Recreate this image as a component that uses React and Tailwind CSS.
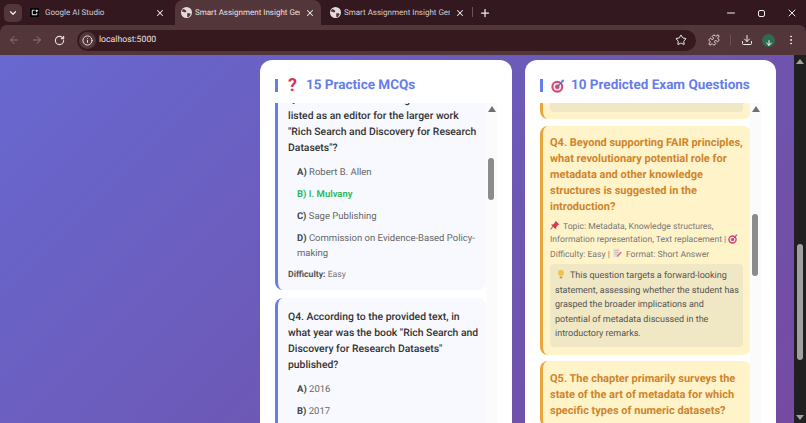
import { ChevronDown, X, Plus, Minus, ArrowLeft, ArrowRight, RotateCw, Info, Star, Puzzle, Download, EllipsisVertical, ArrowDown } from "lucide-react";

const Pin = () => (
  <svg viewBox="0 0 16 16" className="inline-block w-[10px] h-[10px] mr-[3px] align-[-1px]">
    <path d="M9 1l6 6-2 1-3 3 0 3-2 0-6-6 0-1 3 0 3-3z" fill="#d9364f" />
    <path d="M5 10l-4 5" stroke="#a8344a" strokeWidth="1.6" />
  </svg>
);

const Target = ({ size }) => (
  <svg viewBox="0 0 20 20" style={{ width: size, height: size }} className="inline-block shrink-0 align-[-2px]">
    <circle cx="9" cy="11" r="8.5" fill="#d6456f" />
    <circle cx="9" cy="11" r="5.6" fill="#f6e6ea" />
    <circle cx="9" cy="11" r="3.2" fill="#d6456f" />
    <path d="M9 11l8-8" stroke="#4a78c8" strokeWidth="2" />
    <path d="M15 1l4 0-1 3-3 1z" fill="#4a90d9" />
  </svg>
);

const Memo = () => (
  <svg viewBox="0 0 16 16" className="inline-block w-[10px] h-[10px] mr-[4px] align-[-1px]">
    <rect x="2" y="1" width="10" height="14" fill="#eadfd4" />
    <path d="M4 4h6M4 7h6M4 10h4" stroke="#b9a6a0" strokeWidth="1" />
    <path d="M8 12l6-6 1.5 1.5-6 6-2 .5z" fill="#d8608a" />
  </svg>
);

const Bulb = () => (
  <svg viewBox="0 0 16 16" className="inline-block w-[10px] h-[10px] ml-[1px] mr-[4px] align-[-1px]">
    <path d="M8 1a5 5 0 0 0-3 9l1 2h4l1-2a5 5 0 0 0-3-9z" fill="#f4c04e" />
    <rect x="6" y="12.5" width="4" height="2.5" fill="#a59a84" />
  </svg>
);

const StudioIcon = () => (
  <svg viewBox="0 0 16 16" className="w-[9px] h-[9px] shrink-0">
    <rect width="16" height="16" rx="2" fill="#000" />
    <path d="M8 4H4v8h8V9" fill="none" stroke="#fff" strokeWidth="1.6" />
    <path d="M12 2l1 2 2 1-2 1-1 2-1-2-2-1 2-1z" fill="#fff" />
  </svg>
);

const GlobeIcon = ({ className = "" }) => (
  <svg viewBox="0 0 16 16" className={`w-[11px] h-[11px] shrink-0 ${className}`}>
    <circle cx="8" cy="8" r="8" fill="#e4dcdc" />
    <path d="M3 3l3 1 2 2-2 2-3-1-2-1zM9 9l4 0 1 2-3 4-2-1z" fill="#53363a" />
  </svg>
);

const Tab = ({ active, icon, title, width, closeGap = "pr-[6px]" }) => (
  <div
    style={{ width }}
    className={`h-[25px] flex items-center pl-[6px] ${closeGap} shrink-0 ${active ? "bg-[#53363a] rounded-t-[8px] text-[#e9e1e1]" : "text-[#d5c9ca]"}`}
  >
    {icon}
    <span className="ml-[3px] flex-1 text-[8px] whitespace-nowrap overflow-hidden">{title}</span>
    <X size={10} strokeWidth={2.5} className="ml-[5px] text-[#eee]" />
  </div>
);

const Option = ({ letter, children, correct }) => (
  <p className={`mb-[7px] pl-[9px] text-[9.5px] leading-[15px] ${correct ? "text-[#28b765] font-semibold" : "text-[#666]"}`}>
    <span className={`font-bold ${correct ? "" : "text-[#444]"}`}>{letter}) </span>
    {children}
  </p>
);

const McqCard = ({ children, className = "" }) => (
  <div className={`bg-[#f8f9ff] border-l-[3px] border-[#667eea] rounded-[8px] pl-[10px] pr-[6px] ${className}`}>
    {children}
  </div>
);

const Scrollbar = ({ top, height }) => (
  <div className="absolute top-0 bottom-0 right-0 w-[11px] bg-[#fbfbfc]">
    <div className="mx-auto mt-[3px] w-0 h-0 border-x-[4px] border-x-transparent border-b-[6px] border-b-[#6f6f6f]" />
    <div style={{ top, height }} className="absolute left-[2px] w-[6px] rounded-[3px] bg-[#8b8b8b]" />
  </div>
);

const Heading = ({ icon, children }) => (
  <div className="flex items-center h-[43px] pl-[15px] pt-[8px]">
    <div className="w-[3px] h-[13px] bg-[#667eea] mr-[10px]" />
    {icon}
    <h2 className="text-[13.5px] font-bold text-[#667eea] whitespace-nowrap">{children}</h2>
  </div>
);

export default function App() {
  return (
    <div className="w-[806px] h-[423px] overflow-hidden flex flex-col bg-[#33191f] font-['Roboto',sans-serif] [text-rendering:geometricPrecision]">
      {/* tab strip */}
      <div className="h-[25px] flex items-end pt-[4px] pl-[4px] bg-[#33191f]">
        <div className="w-[18px] h-[18px] mb-[3px] mr-[3px] rounded-[5px] bg-[#53363a] flex items-center justify-center">
          <ChevronDown size={10} strokeWidth={3} className="text-[#eee]" />
        </div>
        <Tab width={150} closeGap="pr-[10px]" title="Google AI Studio" icon={<span className="flex ml-[-1px] mr-[3px]"><StudioIcon /></span>} />
        <Tab active width={146} title="Smart Assignment Insight Gene" icon={<GlobeIcon />} />
        <Tab width={150} title="Smart Assignment Insight Gene" icon={<GlobeIcon className="ml-[3px]" />} />
        <div className="w-px h-[10px] bg-[#6a5256] mb-[8px] ml-[1px]" />
        <Plus size={12} strokeWidth={2.5} className="text-[#eee] mb-[6px] ml-[6px]" />
        <div className="flex-1" />
        <div className="flex items-center gap-[21px] mb-[6px] pr-[8px] text-[#eee]">
          <Minus size={12} />
          <div className="w-[7px] h-[7px] border-[1.5px] border-[#eee] rounded-[2px]" />
          <X size={12} strokeWidth={2} />
        </div>
      </div>
      {/* toolbar */}
      <div className="h-[30px] flex items-center bg-[#53363a] pl-[8px] pr-[8px] rounded-t-[7px]">
        <ArrowLeft size={12} className="text-[#8a7578] mr-[11px]" />
        <ArrowRight size={12} className="text-[#8a7578] mr-[11px]" />
        <RotateCw size={11} strokeWidth={2.5} className="text-[#e6dcdc] mr-[12px]" />
        <div className="w-[619px] h-[21px] rounded-full bg-[#35191f] flex items-center pl-[2px] pr-[9px]">
          <div className="w-[17px] h-[17px] rounded-full bg-[#53363a] flex items-center justify-center">
            <Info size={11} className="text-[#eee]" />
          </div>
          <span className="ml-[3px] flex-1 pt-[1px] text-[8.7px] text-[#e9e1e1]">localhost:5000</span>
          <Star size={12} className="text-[#eee]" />
        </div>
        <Puzzle size={12} className="text-[#e6dcdc] ml-[12px]" />
        <div className="w-px h-[10px] bg-[#6a5256] ml-[10px]" />
        <Download size={12} className="text-[#eee] ml-[10px]" />
        <div className="w-[13px] h-[13px] rounded-full bg-[#2e6b4f] ml-[9px] flex items-end justify-center">
          <ArrowDown size={8} strokeWidth={3} className="text-white" />
        </div>
        <EllipsisVertical size={12} className="text-[#eee] ml-[10px]" />
      </div>
      {/* page */}
      <div className="h-[368px] flex overflow-hidden">
        <div className="flex-1 flex gap-[13px] pl-[260px] pt-[5px] bg-[linear-gradient(135deg,#6868d0_0%,#6f52ab_75%,#764ba2_100%)]">
          <section className="w-[252px] h-[400px] bg-white rounded-[12px] shrink-0">
            <Heading icon={<span className="text-[18px] font-bold text-[#d8334f] mr-[9px] leading-none">?</span>}>15 Practice MCQs</Heading>
            <div className="relative h-[320px] ml-[15px] mr-[15px] overflow-hidden">
              <div className="-mt-[11px] pr-[11px]">
                <McqCard className="pb-[8px] mb-[8px]">
                  <p className="text-[10.4px] font-medium leading-[16px] text-[#333] mb-[9px]">
                    Q3. Which of the following individuals is listed as an editor for the larger work "Rich Search and Discovery for Research Datasets"?
                  </p>
                  <Option letter="A">Robert B. Allen</Option>
                  <Option letter="B" correct>I. Mulvany</Option>
                  <Option letter="C">Sage Publishing</Option>
                  <Option letter="D">Commission on Evidence-Based Policy-making</Option>
                  <p className="text-[8.7px] text-[#777] mt-[8px]"><span className="font-bold text-[#555]">Difficulty:</span> Easy</p>
                </McqCard>
                <McqCard className="pt-[11px] pb-[9px]">
                  <p className="text-[10.4px] font-medium leading-[16px] text-[#333] mb-[9px]">
                    Q4. According to the provided text, in what year was the book "Rich Search and Discovery for Research Datasets" published?
                  </p>
                  <Option letter="A">2016</Option>
                  <Option letter="B">2017</Option>
                </McqCard>
              </div>
              <Scrollbar top={55} height={42} />
            </div>
          </section>
          <section className="w-[251px] h-[400px] bg-white rounded-[12px] shrink-0">
            <Heading icon={<span className="mr-[6px] -ml-[2px] flex"><Target size={14} /></span>}>10 Predicted Exam Questions</Heading>
            <div className="relative h-[320px] ml-[15px] mr-[15px] overflow-hidden">
              <div className="pr-[10px]">
                <div className="-mt-[11px] bg-[#fff3c9] border-l-[3px] border-[#e9a63a] rounded-b-[8px] mb-[7px] pl-[7px] pr-[8px] pb-[7px]">
                  <div className="bg-[#f0e8c4] rounded-b-[4px] px-[5px] pb-[5px] text-[9px] leading-[14.5px] text-[#555]">
                    terminologies and their distinctions.
                  </div>
                </div>
                <div className="bg-[#fff3c9] border-l-[3px] border-[#e9a63a] rounded-[8px] pl-[7px] pr-[8px] pt-[9px] pb-[8px] mb-[6px]">
                  <p className="text-[11px] font-bold leading-[16px] text-[#d0842a] mb-[5px]">
                    Q4. Beyond supporting FAIR principles, what revolutionary potential role for metadata and other knowledge structures is suggested in the introduction?
                  </p>
                  <p className="text-[8.6px] leading-[13.5px] text-[#777] mb-[2px]">
                    <Pin />Topic: Metadata, Knowledge structures, Information representation, Text replacement | <Target size={10} /> Difficulty: Easy | <Memo />Format: Short Answer
                  </p>
                  <div className="bg-[#f0e8c4] rounded-[4px] pl-[5px] pr-[2px] py-[5px] text-[9px] leading-[14.5px] text-[#555]">
                    <Bulb />This question targets a forward-looking statement, assessing whether the student has grasped the broader implications and potential of metadata discussed in the introductory remarks.
                  </div>
                </div>
                <div className="bg-[#fff3c9] border-l-[3px] border-[#e9a63a] rounded-[8px] pl-[7px] pr-[8px] pt-[10px] pb-[8px]">
                  <p className="text-[11px] font-bold leading-[16px] text-[#d0842a]">
                    Q5. The chapter primarily surveys the state of the art of metadata for which specific types of numeric datasets?
                  </p>
                </div>
              </div>
              <Scrollbar top={111} height={62} />
            </div>
          </section>
        </div>
        {/* page scrollbar */}
        <div className="relative w-[12px] bg-[#202020]">
          <div className="mx-auto mt-[4px] w-0 h-0 border-x-[4px] border-x-transparent border-b-[5px] border-b-[#a0a0a0]" />
          <div className="absolute left-[3px] top-[189px] w-[6px] h-[116px] rounded-[3px] bg-[#a0a0a0]" />
          <div className="absolute bottom-[3px] left-[2px] w-0 h-0 border-x-[4px] border-x-transparent border-t-[5px] border-t-[#a0a0a0]" />
        </div>
      </div>
    </div>
  );
}
